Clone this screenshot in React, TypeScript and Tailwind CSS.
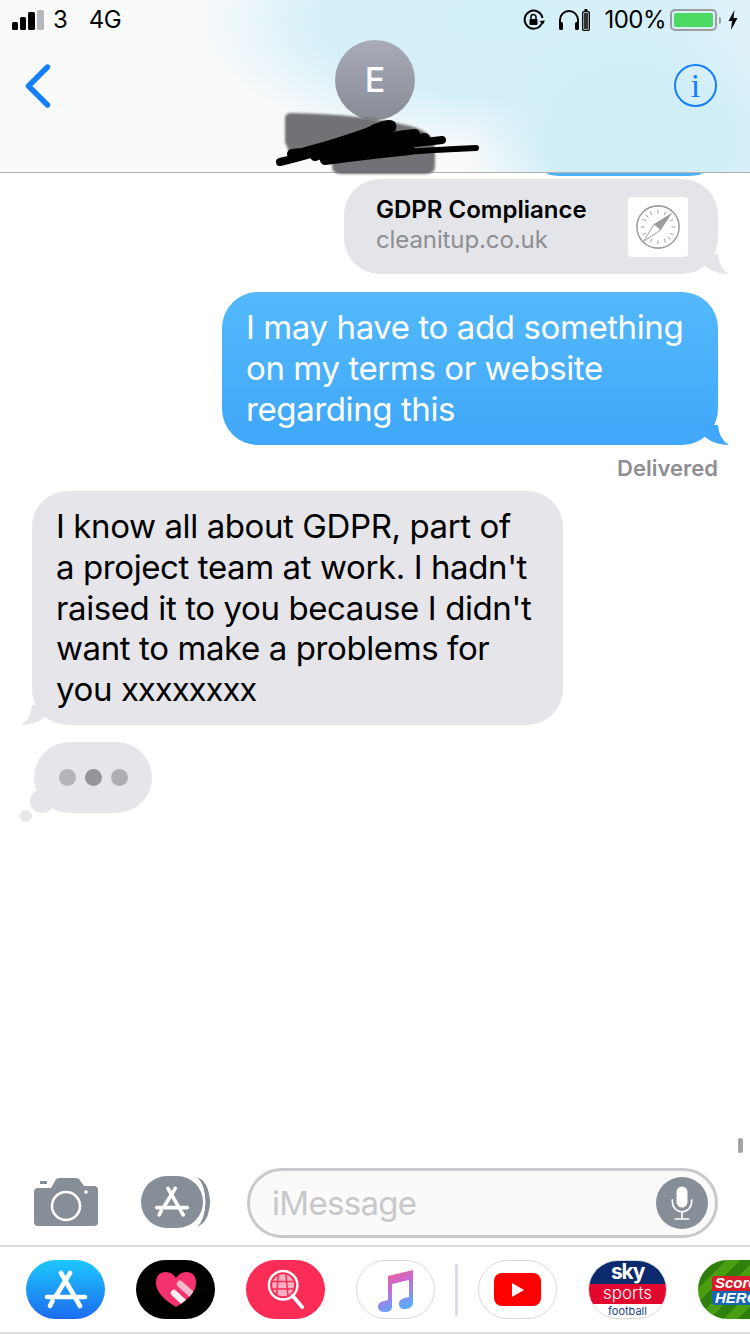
import React from "react";

const font = "font-['Inter','Liberation_Sans',sans-serif]";

const AppStoreGlyph = ({ className = "" }: { className?: string }) => (
  <svg viewBox="0 0 44 40" className={className} fill="none" stroke="currentColor" strokeLinecap="round" strokeWidth="4.6">
    <path d="M26 3 L12 26" />
    <path d="M17 3 L36 36" />
    <path d="M3 27 H41" />
    <path d="M8.5 31 L6 36" />
  </svg>
);

const SignalBars = () => (
  <div className="flex items-end gap-[2px] h-[20px]">
    <div className="w-[6px] h-[8px] rounded-[1.5px] bg-black" />
    <div className="w-[6px] h-[13px] rounded-[1.5px] bg-black" />
    <div className="w-[7px] h-[18px] rounded-[1.5px] bg-black" />
    <div className="w-[7px] h-[20px] rounded-[1.5px] bg-[#b5b8ba]" />
  </div>
);

const StatusRight = () => (
  <div className="flex items-center">
    <svg viewBox="0 0 22 22" className="w-[22px] h-[22px]" fill="none" stroke="black">
      <path d="M19 14 A9 9 0 1 1 19.5 9" strokeWidth="2" />
      <path d="M16.5 12 L20 15.5 L22 11.5 Z" fill="black" stroke="none" />
      <rect x="6.5" y="10" width="8" height="6" rx="1" fill="black" stroke="none" />
      <path d="M8 10 V8 a2.5 2.5 0 0 1 5 0 V10" strokeWidth="1.5" />
    </svg>
    <svg viewBox="0 0 22 22" className="w-[22px] h-[22px] ml-[13px]" fill="none" stroke="black">
      <path d="M2 18 V11 a9 9 0 0 1 18 0 V18" strokeWidth="2" />
      <rect x="1" y="13" width="4" height="8" rx="1.5" fill="black" stroke="none" />
      <rect x="17" y="13" width="4" height="8" rx="1.5" fill="black" stroke="none" />
    </svg>
    <svg viewBox="0 0 8 22" className="w-[8px] h-[22px] ml-[2px]">
      <rect x="2.5" y="0" width="3" height="2" fill="black" />
      <rect x="0.7" y="2.7" width="6.6" height="18.6" rx="1" fill="none" stroke="black" strokeWidth="1.3" />
      <rect x="2" y="4" width="4" height="16" fill="#333" />
    </svg>
    <span className="text-[24px] leading-none ml-[14px] tracking-[-0.5px]">100%</span>
    <div className="ml-[4px] w-[47px] h-[22px] rounded-[5px] border-2 border-[#9a9c9e] p-[2px]">
      <div className="w-full h-full rounded-[2px] bg-[#4cd964]" />
    </div>
    <div className="w-[2px] h-[7px] ml-[2px] rounded-r-[2px] bg-[#9a9c9e]" />
    <svg viewBox="0 0 10 20" className="w-[10px] h-[20px] ml-[7px]">
      <path d="M6.5 0 L0.5 11 H4 L3 20 L9.5 8 H5.5 Z" fill="black" />
    </svg>
  </div>
);

const Header = () => (
  <header className="relative h-[173px] shrink-0 border-b border-[#b2b2b2] bg-[radial-gradient(ellipse_170px_120px_at_640px_140px,#cfeef8_0%,#d2eff8_55%,rgba(214,240,249,0)_100%),radial-gradient(ellipse_300px_130px_at_500px_20px,#d4f0f9_0%,#d6f0f9_60%,rgba(214,240,249,0)_100%),linear-gradient(90deg,#f9fafa_0%,#f8f9fa_60%,#e4f3f9_100%)]">
    <div className="flex items-center justify-between h-[40px] px-[12px] text-black">
      <div className="flex items-center">
        <SignalBars />
        <span className="text-[24px] leading-none ml-[9px]">3</span>
        <span className="text-[24px] leading-none ml-[21px] tracking-[-0.5px]">4G</span>
      </div>
      <StatusRight />
    </div>
    <div className="grid grid-cols-[1fr_80px_1fr] items-start px-[25px]">
      <svg viewBox="0 0 26 44" className="w-[26px] h-[44px] mt-[24px]" fill="none" stroke="#147efb" strokeWidth="5.4" strokeLinecap="round" strokeLinejoin="round">
        <path d="M22.5 3 L3.5 22 L22.5 41" />
      </svg>
      <div className="w-[80px] h-[80px] rounded-full bg-[linear-gradient(#a9acb7,#888c97)] flex items-center justify-center text-white text-[34px] font-medium leading-none relative z-10">
        E
      </div>
      <div className="justify-self-end mr-[8px] w-[43px] h-[43px] mt-[24px] rounded-full border-2 border-[#147efb] flex items-center justify-center text-[#147efb] font-['Liberation_Serif',serif] text-[34px] leading-none">
        i
      </div>
    </div>
    {/* scribbled out name */}
    <svg viewBox="0 0 220 70" className="absolute left-[270px] top-[108px] w-[220px] h-[70px] z-20">
      <path d="M15 34 L15 10 Q15 5 22 5 Q90 6 140 18 Q165 24 165 42 L165 58 Q165 66 155 66 H72 Q62 66 62 58 V46 H20 Z" fill="#5a5b5f" opacity="0.85" className="blur-[1px]" />
      <g fill="none" stroke="black" strokeLinecap="round">
        <path d="M10 54 Q70 40 105 20 Q125 12 122 20 Q95 34 50 46 L172 32" strokeWidth="8" />
        <path d="M22 46 Q90 40 155 30 M55 52 Q100 46 140 42 M100 24 Q60 38 35 44 M45 48 Q100 30 145 26" strokeWidth="10" />
        <path d="M60 50 Q120 44 206 40" strokeWidth="6" />
      </g>
    </svg>
  </header>
);

const TailRight = ({ fill }: { fill: string }) => (
  <svg viewBox="0 0 26 20" className="absolute right-[-11px] bottom-0 w-[26px] h-[20px]">
    <path d="M2 12 Q12 20 26 20 Q16 14 15 0 H2 Z" fill={fill} />
  </svg>
);

const LinkBubble = () => (
  <div className="relative ml-auto mr-[32px] w-[374px] h-[95px] rounded-[36px] bg-[#e4e5e9] flex items-center justify-between pl-[32px] pr-[30px]">
    <div className="mb-[3px]">
      <p className="text-[24px] leading-[30px] font-semibold text-black">GDPR Compliance</p>
      <p className="text-[24px] leading-[30px] text-[#8e8e93] tracking-[-0.1px]">cleanitup.co.uk</p>
    </div>
    <div className="w-[60px] h-[60px] bg-white rounded-[4px] flex items-center justify-center">
      <svg viewBox="0 0 50 50" className="w-[48px] h-[48px]" fill="none" stroke="#9c9c9c">
        <circle cx="25" cy="25" r="22" strokeWidth="1.6" />
        <path d="M25 7 V11 M25 39 V43 M7 25 H11 M39 25 H43 M12 12 L15 15 M38 12 L35 15 M12 38 L15 35 M38 38 L35 35 M17 9 L18.5 12.5 M33 9 L31.5 12.5 M9 17 L12.5 18.5 M41 17 L37.5 18.5 M9 33 L12.5 31.5 M41 33 L37.5 31.5 M17 41 L18.5 37.5 M33 41 L31.5 37.5" strokeWidth="1" />
        <path d="M40 10 L21 22 L28 28 Z" fill="#9c9c9c" stroke="none" />
        <path d="M10 40 L21 22 L28 28 Z" fill="white" strokeWidth="1" />
      </svg>
    </div>
    <TailRight fill="#e4e5e9" />
  </div>
);

const BlueBubble = () => (
  <div className="relative ml-auto mr-[32px] mt-[18px] w-[496px] rounded-[36px] bg-[linear-gradient(#53b9fb,#40a7fa)] pl-[24px] py-[15px] text-white text-[33px] leading-[41px] tracking-[-0.4px] whitespace-nowrap">
    I may have to add something
    <br />
    on my terms or website
    <br />
    regarding this
    <TailRight fill="#40a7fa" />
  </div>
);

const GrayBubble = () => (
  <div className="relative ml-[32px] mt-[9px] w-[531px] h-[234px] rounded-[36px] bg-[#e5e5ea] pl-[24px] py-[15px] text-black text-[33px] leading-[40.75px] tracking-[-0.4px] whitespace-nowrap">
    I know all about GDPR, part of
    <br />
    a project team at work. I hadn't
    <br />
    raised it to you because I didn't
    <br />
    want to make a problems for
    <br />
    you <span className="tracking-[-1.1px]">xxxxxxxx</span>
    <svg viewBox="0 0 26 20" className="absolute left-[-11px] bottom-0 w-[26px] h-[20px]">
      <path d="M24 12 Q14 20 0 20 Q10 14 11 0 H24 Z" fill="#e5e5ea" />
    </svg>
  </div>
);

const TypingBubble = () => (
  <div className="relative ml-[34px] mt-[17px] w-[118px] h-[71px] rounded-[36px] bg-[#e5e5ea] flex items-center justify-center gap-[9px]">
    <div className="w-[17px] h-[17px] rounded-full bg-[#b4b4b9]" />
    <div className="w-[17px] h-[17px] rounded-full bg-[#949499]" />
    <div className="w-[17px] h-[17px] rounded-full bg-[#adadb2]" />
    <div className="absolute left-[-4px] bottom-[0px] w-[24px] h-[24px] rounded-full bg-[#e5e5ea]" />
    <div className="absolute left-[-14px] bottom-[-9px] w-[12px] h-[12px] rounded-full bg-[#e5e5ea]" />
  </div>
);

const Composer = () => (
  <div className="relative h-[79px] shrink-0 flex items-start pl-[34px] border-b-2 border-[#dcdce0]">
    <svg viewBox="0 0 64 48" className="w-[64px] h-[48px] mt-[10px]">
      <path d="M4 10 H17 L21 3 Q22 0 26 0 H42 Q45 0 47 4 L50 8 H60 Q64 8 64 12 V44 Q64 48 60 48 H4 Q0 48 0 44 V14 Q0 10 4 10 Z" fill="#868e98" />
      <rect x="6" y="3" width="7" height="3" rx="0.5" fill="#868e98" />
      <circle cx="32" cy="28" r="14" fill="none" stroke="white" strokeWidth="2.6" />
      <circle cx="52" cy="14" r="1.8" fill="white" />
    </svg>
    <div className="relative w-[62px] h-[52px] ml-[43px] mt-[8px] rounded-full bg-[#868e98] flex items-center justify-center text-white">
      <AppStoreGlyph className="w-[36px] h-[32px]" />
      <svg viewBox="0 0 14 52" className="absolute right-[-8px] top-0 w-[14px] h-[52px]">
        <path d="M0 1 Q10 5 12 18 Q14 26 12 34 Q10 47 0 51 Q8 44 8.5 26 Q8 8 0 1 Z" fill="#868e98" />
      </svg>
    </div>
    <div className="w-[471px] h-[70px] ml-[44px] rounded-[35px] border-[3px] border-[#c8c8cd] bg-[#fafafa] flex items-center justify-between pl-[22px] pr-[7px]">
      <span className="text-[33px] leading-none text-[#c7c7cc] tracking-[-0.7px]">iMessage</span>
      <div className="w-[52px] h-[52px] rounded-full bg-[#868e98] flex items-center justify-center">
        <svg viewBox="0 0 24 38" className="w-[22px] h-[36px]" fill="none" stroke="white" strokeWidth="1.8">
          <rect x="6" y="1" width="12" height="23" rx="6" fill="white" stroke="none" />
          <path d="M1.5 15 V18 a10.5 10.5 0 0 0 21 0 V15 M12 29 V36 M4 36.5 H20" />
        </svg>
      </div>
    </div>
  </div>
);

const AppOval = ({ className = "", children }: { className?: string; children?: React.ReactNode }) => (
  <div className={`w-[79px] h-[59px] shrink-0 rounded-full overflow-hidden flex items-center justify-center ${className}`}>
    {children}
  </div>
);

const AppStrip = () => (
  <div className="h-[87px] shrink-0 flex items-center pl-[26px] gap-[31px] overflow-hidden border-b-2 border-[#dcdce0]">
    <AppOval className="bg-[linear-gradient(#1dc8fd,#1c6cf0)] text-white">
      <AppStoreGlyph className="w-[44px] h-[40px]" />
    </AppOval>
    <AppOval className="bg-black">
      <svg viewBox="0 0 40 35" className="w-[40px] h-[35px]">
        <defs>
          <clipPath id="heartClip">
            <path d="M20 35 Q0 23 0 11 Q0 0 10 0 Q16 0 20 6 Q24 0 30 0 Q40 0 40 11 Q40 23 20 35 Z" />
          </clipPath>
        </defs>
        <path d="M20 35 Q0 23 0 11 Q0 0 10 0 Q16 0 20 6 Q24 0 30 0 Q40 0 40 11 Q40 23 20 35 Z" fill="#f5326e" />
        <g clipPath="url(#heartClip)" strokeWidth="6.5" strokeLinecap="round">
          <path d="M24 12 L42 28" stroke="#f9b9cd" />
          <path d="M18 21 L34 36" stroke="#fdeef3" />
        </g>
      </svg>
    </AppOval>
    <AppOval className="bg-[#fb2c55]">
      <svg viewBox="0 0 40 44" className="w-[38px] h-[42px]" fill="none" stroke="white">
        <circle cx="17" cy="17" r="15" strokeWidth="2.5" />
        <circle cx="17" cy="17" r="11.5" fill="#fbb0c0" stroke="none" />
        <path d="M6 13 H28 M5 21 H29 M12 6 L10 28 M20 6 L22 28" stroke="#fb2c55" strokeWidth="1.6" />
        <path d="M27 28 L37 40" strokeWidth="4" strokeLinecap="round" />
      </svg>
    </AppOval>
    <AppOval className="border border-[#d8d8d8] bg-white">
      <svg viewBox="0 0 36 44" className="w-[36px] h-[44px]">
        <defs>
          <linearGradient id="note" x1="0" y1="0" x2="0.4" y2="1">
            <stop offset="0" stopColor="#fb5c74" />
            <stop offset="0.5" stopColor="#c86ad8" />
            <stop offset="1" stopColor="#5ea8fb" />
          </linearGradient>
        </defs>
        <path d="M10 8 L35 2 V34 Q35 40 28 41 Q21 42 21 36 Q21 31 27 30 L31 29 V12 L14 16 V39 Q14 44 7 44 Q0 44 0 39 Q0 34 6 33 L10 32 Z" fill="url(#note)" />
      </svg>
    </AppOval>
    <div className="w-[3px] h-[52px] rounded-full bg-[#dcdce4] ml-[-11px] mr-[-11px] shrink-0" />
    <AppOval className="border border-[#d8d8d8] bg-white">
      <div className="w-[47px] h-[33px] rounded-[8px] bg-[#fe0000] flex items-center justify-center">
        <div className="w-0 h-0 border-y-[7px] border-y-transparent border-l-[12px] border-l-white" />
      </div>
    </AppOval>
    <AppOval className="border border-[#d8d8d8] bg-white flex-col justify-start">
      <div className="w-full h-[23px] shrink-0 bg-[#0b2a6e] text-white text-[21px] font-bold leading-[22px] text-center tracking-[-1.2px]">sky</div>
      <div className="w-full h-[20px] shrink-0 bg-[#e3062e] text-white text-[17px] font-light leading-[19px] text-center">sports</div>
      <div className="w-full text-[#24407e] text-[11px] leading-[14px] text-center">football</div>
    </AppOval>
    <AppOval className="relative bg-[repeating-linear-gradient(135deg,#4a9c10_0px,#4a9c10_10px,#2f7f0c_10px,#2f7f0c_20px)]">
      <div className="absolute left-[14px] top-[16px] w-[70px] text-white font-bold italic text-[15px] leading-[14px] font-['Liberation_Sans',sans-serif]">
        <div className="bg-[#d81c2c] pl-[3px] h-[15px] rounded-tl-[3px]">Score</div>
        <div className="bg-[#1566b0] pl-[3px] h-[14px] rounded-bl-[3px]">HERO</div>
      </div>
    </AppOval>
  </div>
);

export default function App() {
  return (
    <div className={`relative w-[750px] h-[1334px] flex flex-col overflow-hidden bg-white ${font}`}>
      <Header />
      <main className="flex-1">
        <div className="w-[155px] h-[3px] ml-[547px] rounded-b-[14px_3px] bg-[#4fb3fb]" />
        <div className="h-[3px]" />
        <LinkBubble />
        <BlueBubble />
        <p className="mt-[10px] mr-[32px] text-right text-[22px] leading-[27px] font-semibold text-[#8e8e93]">Delivered</p>
        <GrayBubble />
        <TypingBubble />
      </main>
      <div className="absolute left-[738px] top-[1138px] w-[5px] h-[15px] rounded-full bg-[#a3a3a3]" />
      <Composer />
      <AppStrip />
    </div>
  );
}
